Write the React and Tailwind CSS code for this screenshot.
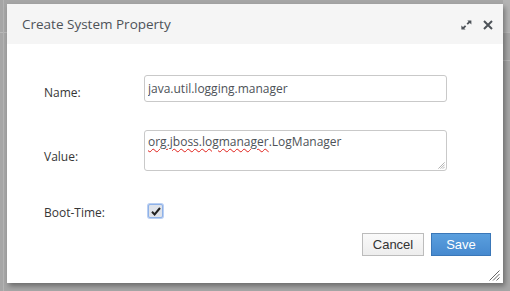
import { useState } from 'react';

function ExpandIcon() {
  return (
    <svg width="11" height="10" viewBox="0 0 11 10" className="text-[#4d5258]">
      <path d="M6.2 4.2 L8.6 1.8" stroke="currentColor" strokeWidth="1.8" />
      <path d="M6.3 0.4 L10.4 0.4 L10.4 4.5 Z" fill="currentColor" />
      <path d="M4.6 5.8 L2.2 8.2" stroke="currentColor" strokeWidth="1.8" />
      <path d="M0.4 5.5 L0.4 9.6 L4.5 9.6 Z" fill="currentColor" />
    </svg>
  );
}

function CloseIcon() {
  return (
    <svg width="10" height="10" viewBox="0 0 10 10" className="text-[#4d5258]">
      <path d="M1 1 L9 9 M9 1 L1 9" stroke="currentColor" strokeWidth="2" />
    </svg>
  );
}

function ResizeGrip({ size = 11, color = '#777' }) {
  return (
    <svg width={size} height={size} viewBox="0 0 11 11">
      <path d="M10.5 0.5 L0.5 10.5 M10.5 4 L4 10.5 M10.5 7.5 L7.5 10.5" stroke={color} strokeWidth="1" />
    </svg>
  );
}

function App() {
  const [name, setName] = useState('java.util.logging.manager');
  const [bootTime, setBootTime] = useState(true);

  return (
    <div className="relative w-[510px] h-[291px] overflow-hidden bg-[#a6a6a6] pl-[7px] pt-[4px] font-['Open_Sans',sans-serif]">
      {/* dimmed page behind the dialog */}
      <div className="absolute left-0 top-[32px] w-full h-px bg-[#b9b9b9]" />
      <div className="absolute left-[3px] top-0 w-px h-full bg-[#b4b4b4]" />
      <div className="absolute right-0 top-0 w-[7px] h-[32px] bg-[#b3b3b3]" />
      <div className="absolute right-0 top-[60px] w-[7px] h-px bg-[#b9b9b9]" />

      <div className="relative flex flex-col w-[496px] h-[279px] bg-white shadow-[2px_3px_5px_rgba(0,0,0,0.35)]">
        <div className="flex items-center justify-between h-[40px] bg-[#f5f5f5] pl-[15px] pr-[10px]">
          <h1 className="text-[13.5px] text-[#4d5258]">Create System Property</h1>
          <div className="flex items-center gap-[11px] pt-[2px]">
            <ExpandIcon />
            <CloseIcon />
          </div>
        </div>

        <form className="flex flex-col pl-[37px] pt-[31px] text-[12px] text-[#363636]">
          <div className="flex items-start h-[27px]">
            <label htmlFor="name" className="w-[100px] pt-[10px] leading-[16px]">Name:</label>
            <input
              id="name"
              value={name}
              onChange={(event) => setName(event.target.value)}
              className="w-[303px] h-[27px] border border-[#c9c9c9] rounded-[3px] px-[3px] text-[12px] text-[#4d5258] outline-none"
            />
          </div>

          <div className="flex items-start mt-[28px]">
            <label className="w-[100px] pt-[19px] leading-[16px]">Value:</label>
            <div className="relative w-[303px] h-[41px] border border-[#c9c9c9] rounded-[3px] px-[3px] pt-[3px] leading-[16px] text-[#4d5258]">
              <span className="underline decoration-wavy decoration-[#e0201a] decoration-[1px] underline-offset-[2px]">org.jboss.logmanager</span>.LogManager
              <div className="absolute right-[1px] bottom-[1px]">
                <ResizeGrip size={7} color="#888" />
              </div>
            </div>
          </div>

          <div className="flex items-start mt-[33px]">
            <label className="w-[104px] pt-[1px] leading-[16px]">Boot-Time:</label>
            <button
              type="button"
              onClick={() => setBootTime(!bootTime)}
              className="flex items-center justify-center w-[15px] h-[14px] rounded-[2px] border border-[#8fb2e8] bg-[#dfe3ea] shadow-[0_0_0_1px_#b9cff3]"
            >
              {bootTime && (
                <svg width="10" height="9" viewBox="0 0 10 9">
                  <path d="M1 4.8 L3.6 7.4 L9 1" stroke="#222" strokeWidth="2" fill="none" />
                </svg>
              )}
            </button>
          </div>

          <div className="flex justify-end gap-[7px] mt-[12px] pr-[12px] font-['Liberation_Sans',Arial,sans-serif] text-[13px]">
            <button
              type="button"
              className="w-[62px] h-[23px] border border-[#bcbcbc] bg-gradient-to-b from-[#fafafa] to-[#ededed] text-[#333]"
            >
              Cancel
            </button>
            <button
              type="submit"
              className="w-[60px] h-[23px] border border-[#3a77b8] bg-gradient-to-b from-[#5a9fde] to-[#4689cf] text-white"
            >
              Save
            </button>
          </div>
        </form>

        <div className="absolute right-[3px] bottom-[2px]">
          <ResizeGrip size={11} color="#666" />
        </div>
      </div>
    </div>
  );
}

export default App;
